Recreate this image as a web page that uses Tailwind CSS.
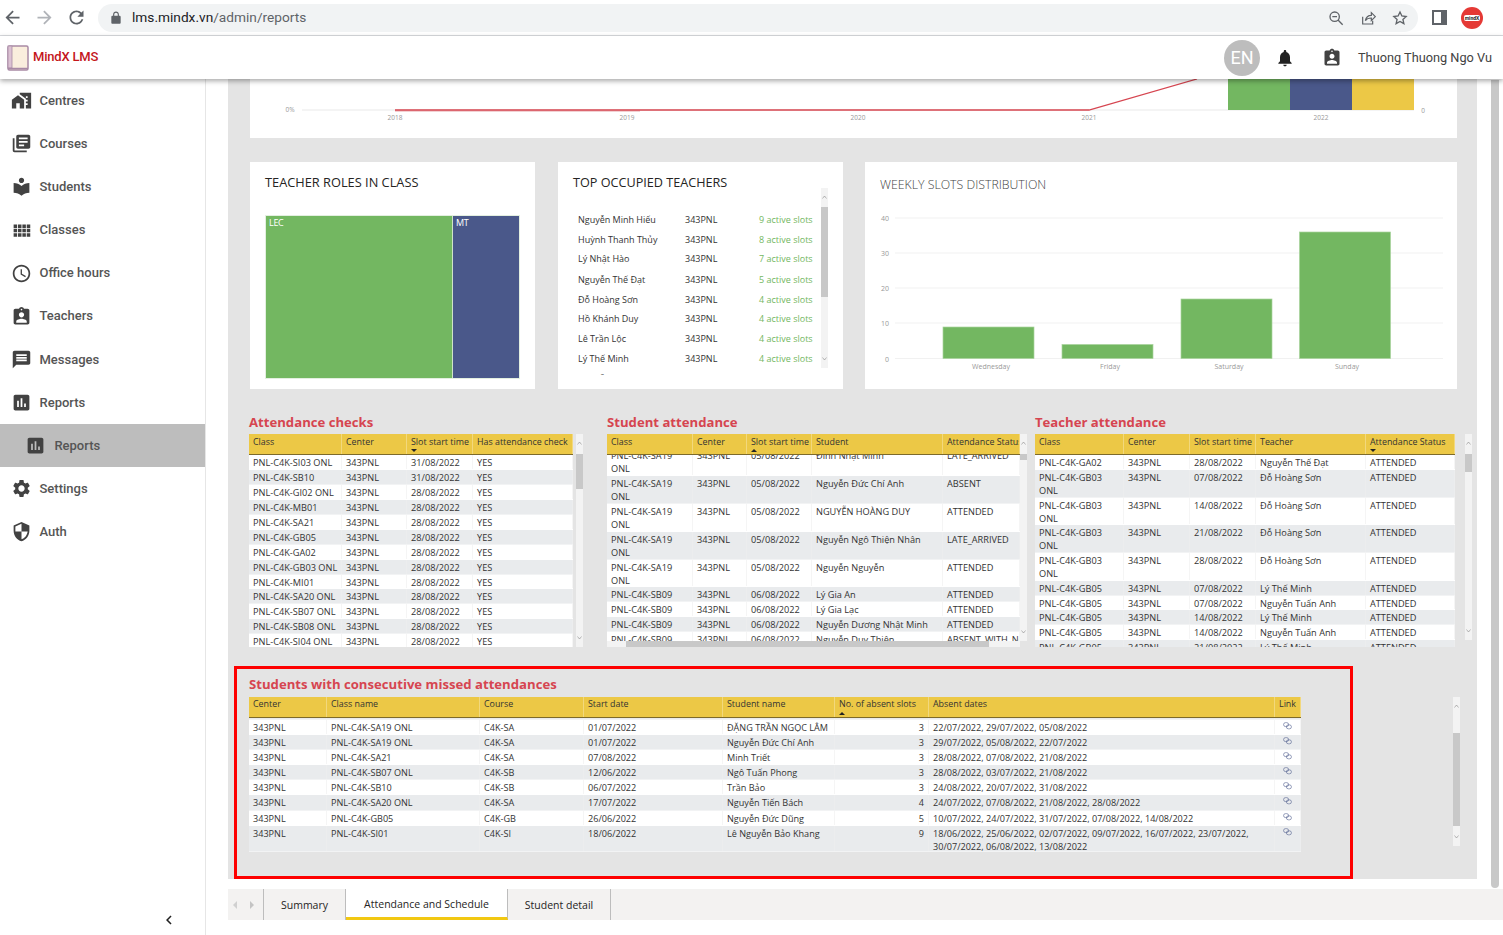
<!DOCTYPE html>
<html lang="en">
<head>
    <meta charset="UTF-8">
    <meta name="viewport" content="width=device-width, initial-scale=1.0">
    <title>MindX LMS - Reports</title>
    <script src="https://cdn.jsdelivr.net/npm/@tailwindcss/browser@4"></script>
</head>
<body class="bg-white">
<div class="relative w-[1503px] h-[935px] overflow-hidden flex flex-col font-['Roboto',sans-serif]">

    <!-- browser bar -->
    <div class="h-[36px] flex items-center bg-white border-b border-[#dadce0] shrink-0">
        <div class="w-[98px] flex items-center pl-[1.500px] gap-[11px]">
            <svg class="w-[21px] h-[21px] fill-[#5f6368]" viewBox="0 0 24 24"><path d="M20 11H7.830l5.590-5.590L12 4l-8 8 8 8 1.410-1.410L7.830 13H20v-2z"/></svg>
            <svg class="w-[21px] h-[21px] fill-[#b0b3b8]" viewBox="0 0 24 24"><path d="M4 11h12.170l-5.590-5.590L12 4l8 8-8 8-1.410-1.410L16.170 13H4v-2z"/></svg>
            <svg class="w-[21px] h-[21px] fill-[#5f6368]" viewBox="0 0 24 24"><path d="M17.650 6.350C16.200 4.900 14.210 4 12 4c-4.420 0-7.990 3.580-7.990 8s3.570 8 7.990 8c3.730 0 6.840-2.550 7.730-6h-2.080c-.82 2.330-3.040 4-5.650 4-3.310 0-6-2.690-6-6s2.690-6 6-6c1.660 0 3.140.69 4.220 1.780L13 11h7V4l-2.350 2.350z"/></svg>
        </div>
        <div class="w-[1320px] h-[28px] rounded-full bg-[#f1f3f4] flex items-center pl-[11px] pr-[10px]">
            <svg class="w-[14px] h-[14px] fill-[#5f6368]" viewBox="0 0 24 24"><path d="M18 8h-1V6c0-2.760-2.240-5-5-5S7 3.240 7 6v2H6c-1.100 0-2 .9-2 2v10c0 1.100.9 2 2 2h12c1.100 0 2-.9 2-2V10c0-1.100-.9-2-2-2zM9 6c0-1.660 1.340-3 3-3s3 1.340 3 3v2H9V6z"/></svg>
            <span class="ml-[9px] text-[13.700px] text-[#202124]">lms.mindx.vn<span class="text-[#5f6368]">/admin/reports</span></span>
            <div class="ml-auto flex items-center gap-[16px]">
                <svg class="w-[16px] h-[16px] fill-none stroke-[#5f6368] stroke-2" viewBox="0 0 24 24"><circle cx="10" cy="10" r="7"/><path d="M15 15l7 7M6.500 10h7"/></svg>
                <svg class="w-[16px] h-[16px] fill-none stroke-[#5f6368] stroke-[1.800]" viewBox="0 0 24 24"><path d="M4 10v11h15v-5M8 16c1-5 5-8 9-8V4l6 6-6 6v-4c-4 0-7 1-9 4z"/></svg>
                <svg class="w-[16px] h-[16px] fill-none stroke-[#5f6368] stroke-2" viewBox="0 0 24 24"><path d="M12 3l2.800 6 6.400.7-4.800 4.400 1.400 6.400L12 17.200l-5.800 3.300 1.400-6.400-4.800-4.400L9.200 9z"/></svg>
            </div>
        </div>
        <div class="ml-[14px] w-[15px] h-[15px] border-[2px] border-[#5f6368] border-r-[6px]"></div>
        <div class="ml-[14px] w-[22px] h-[22px] rounded-full bg-[#e53935] flex items-center justify-center">
            <span class="bg-white rounded-[2px] px-[1px] text-[5px] leading-[6px] font-bold text-[#222]">mindX</span>
        </div>
    </div>

    <!-- app header -->
    <div class="relative z-10 h-[43px] shrink-0 bg-white flex items-center shadow-[0_2px_5px_rgba(0,0,0,0.35)]">
        <svg class="ml-[7px] w-[22px] h-[26px]" viewBox="0 0 22 26">
            <rect x="1" y="1" width="20" height="24" rx="1.500" fill="#faeedd" stroke="#a98aa5" stroke-width="1.500"/>
            <rect x="1" y="1" width="4" height="22" fill="#dcc1d3" stroke="#a98aa5" stroke-width="0.800"/>
            <path d="M1 23.500h20" stroke="#a98aa5" stroke-width="1.500"/>
        </svg>
        <span class="ml-[4px] -mt-[1px] text-[13px] font-medium text-[#c4161c] tracking-[-0.2px]">MindX LMS</span>
        <div class="ml-auto flex items-center">
            <div class="w-[36px] h-[36px] rounded-full bg-[#bdbdbd] text-white text-[18px] flex items-center justify-center">EN</div>
            <svg class="ml-[15px] w-[20px] h-[20px] fill-[#212121]" viewBox="0 0 24 24"><path d="M12 22c1.100 0 2-.9 2-2h-4c0 1.100.89 2 2 2zm6-6v-5c0-3.070-1.640-5.640-4.500-6.320V4c0-.83-.67-1.500-1.500-1.500s-1.500.67-1.500 1.500v.68C7.630 5.360 6 7.920 6 11v5l-2 2v1h16v-1l-2-2z"/></svg>
            <svg class="ml-[27px] w-[20px] h-[20px] fill-[#424242]" viewBox="0 0 24 24"><path d="M19 3h-4.180C14.400 1.840 13.300 1 12 1c-1.300 0-2.400.84-2.820 2H5c-1.100 0-2 .9-2 2v14c0 1.100.9 2 2 2h14c1.100 0 2-.9 2-2V5c0-1.100-.9-2-2-2zm-7 0c.55 0 1 .45 1 1s-.45 1-1 1-1-.45-1-1 .45-1 1-1zm0 4c1.660 0 3 1.340 3 3s-1.340 3-3 3-3-1.340-3-3 1.340-3 3-3zm6 12H6v-1.400c0-2 4-3.100 6-3.100s6 1.100 6 3.100V19z"/></svg>
            <span class="ml-[16px] mr-[11px] text-[12.750px] text-[#424242]">Thuong Thuong Ngo Vu</span>
        </div>
    </div>

    <div class="flex flex-1 min-h-0">
        <!-- sidebar -->
        <aside class="w-[206px] shrink-0 border-r border-[#e6e6e6] flex flex-col text-[13px] text-[#555] font-medium">
            <div id="nav" class="pt-[0.200px]"></div>
            <div class="mt-auto h-[31px] flex items-center pl-[160px]">
                <svg class="w-[18px] h-[18px] fill-[#212121]" viewBox="0 0 24 24"><path d="M15.410 7.410L14 6l-6 6 6 6 1.410-1.410L10.830 12z"/></svg>
            </div>
        </aside>

        <main class="relative flex-1 pl-[22px] font-['Open_Sans',sans-serif]">
            <div class="relative w-[1249px] h-[800px] bg-[#e4e4e4] overflow-hidden">

                <!-- top chart -->
                <div class="ml-[22px] w-[1207px] h-[59px] bg-white">
                    <svg class="block" width="1207" height="59" viewBox="250 79 1207 59">
                        <line x1="302" y1="110" x2="1414" y2="110" stroke="#f0f0f0" stroke-width="1.500"/>
                        <line x1="395" y1="111" x2="640" y2="111" stroke="#e6a3a8"/>
                        <polyline points="395,110 1089,110 1197,79" fill="none" stroke="#d64550" stroke-width="1.300"/>
                        <rect x="1228" y="79" width="62" height="31" fill="#73b761"/>
                        <rect x="1290" y="79" width="62" height="31" fill="#4a588a"/>
                        <rect x="1352" y="79" width="62" height="31" fill="#ecc846"/>
                        <g font-size="6.500" fill="#999" text-anchor="middle">
                            <text x="290" y="112">0%</text>
                            <text x="395" y="119.500">2018</text>
                            <text x="627" y="119.500">2019</text>
                            <text x="858" y="119.500">2020</text>
                            <text x="1089" y="119.500">2021</text>
                            <text x="1321" y="119.500">2022</text>
                            <text x="1423" y="112.500">0</text>
                        </g>
                    </svg>
                </div>

                <!-- middle cards -->
                <div class="mt-[24px] ml-[22px] flex h-[227px]">
                    <section class="w-[285px] bg-white px-[15px] pt-[12px]">
                        <h3 class="text-[12.800px] leading-[16px] text-[#252423] whitespace-nowrap">TEACHER ROLES IN CLASS</h3>
                        <div class="mt-[25px] w-[255px] h-[164px] flex border border-[#e3efe0] text-white text-[9px] leading-[14px] tracking-[-0.3px]">
                            <div class="w-[187px] bg-[#73b761] pl-[3px] border-r border-[#cfe4c8]">LEC</div>
                            <div class="flex-1 bg-[#4a588a] pl-[3px]">MT</div>
                        </div>
                    </section>
                    <section class="ml-[23px] w-[285px] bg-white px-[15px] pt-[12px]">
                        <h3 class="text-[12.650px] leading-[16px] text-[#252423] whitespace-nowrap">TOP OCCUPIED TEACHERS</h3>
                        <div class="flex h-[180px] -mt-[2px]">
                            <div id="teachers" class="w-[250px] pl-[5px] pt-[25px] text-[9px] leading-[13px] text-[#333] overflow-hidden h-[187px]"></div>
                            <div id="bar-teachers"></div>
                        </div>
                    </section>
                    <section class="ml-[22px] w-[592px] bg-white">
                        <h3 class="pl-[15px] pt-[15px] text-[12.300px] leading-[16px] font-light text-[#444] h-[38px]">WEEKLY SLOTS DISTRIBUTION</h3>
                        <svg class="block" width="592" height="189" viewBox="865 200 592 189">
                            <g stroke="#f1f1f1" stroke-width="1">
                                <line x1="895" y1="218" x2="1443" y2="218"/>
                                <line x1="895" y1="253" x2="1443" y2="253"/>
                                <line x1="895" y1="288" x2="1443" y2="288"/>
                                <line x1="895" y1="323" x2="1443" y2="323"/>
                                <line x1="895" y1="358.500" x2="1443" y2="358.500"/>
                            </g>
                            <g fill="#73b761" stroke="#a9d39d" stroke-width="0.700">
                                <rect x="943" y="327" width="91" height="31.500"/>
                                <rect x="1062" y="344.500" width="91" height="14"/>
                                <rect x="1181" y="299" width="91" height="59.500"/>
                                <rect x="1299.500" y="232" width="91" height="126.500"/>
                            </g>
                            <g font-size="7" fill="#999" text-anchor="middle">
                                <text x="885" y="220.500">40</text>
                                <text x="885" y="255.500">30</text>
                                <text x="885" y="290.500">20</text>
                                <text x="885" y="325.500">10</text>
                                <text x="887" y="361.500">0</text>
                                <text x="991" y="368.500">Wednesday</text>
                                <text x="1110" y="368.500">Friday</text>
                                <text x="1229" y="368.500">Saturday</text>
                                <text x="1347" y="368.500">Sunday</text>
                            </g>
                        </svg>
                    </section>
                </div>

                <!-- three attendance tables -->
                <div class="mt-[26px] ml-[21px] flex h-[232px]">
                    <section class="w-[358px]">
                        <h2 class="h-[19px] text-[13.150px] leading-[15px] font-bold text-[#d64550]">Attendance checks</h2>
                        <div class="flex"><div id="t1"></div><div class="w-[3px]"></div><div id="bar-t1"></div></div>
                    </section>
                    <section class="w-[428px]">
                        <h2 class="h-[19px] text-[13.150px] leading-[15px] font-bold text-[#d64550]">Student attendance</h2>
                        <div class="flex"><div id="t2"></div><div id="bar-t2"></div></div>
                        <div class="w-[413px] h-[6px] bg-[#f3f3f3] -mt-[6px] relative pl-[19px]"><div class="w-[363px] h-[6px] bg-[#c8c8c8]"></div></div>
                    </section>
                    <section class="w-[440px]">
                        <h2 class="h-[19px] text-[13.150px] leading-[15px] font-bold text-[#d64550]">Teacher attendance</h2>
                        <div class="flex"><div id="t3"></div><div class="w-[10px]"></div><div id="bar-t3"></div></div>
                    </section>
                </div>

                <!-- consecutive missed attendances -->
                <section class="mt-[30px] ml-[21px]">
                    <h2 class="h-[20px] text-[13.150px] leading-[15px] font-bold text-[#d64550]">Students with consecutive missed attendances</h2>
                    <div class="flex"><div id="t4"></div><div class="w-[152px]"></div><div id="bar-t4"></div></div>
                </section>

                <div class="absolute left-[6px] top-[587px] w-[1119px] h-[213px] border-[3px] border-[#fe0000] pointer-events-none"></div>
            </div>

            <!-- report tabs -->
            <nav class="mt-[10px] h-[31px] bg-[#f3f2f1] flex text-[10.500px] text-[#252423]">
                <div class="w-[36px] flex items-center gap-[13px] pl-[5px] border-r border-[#bdbdbd]">
                    <span class="w-0 h-0 border-y-[4px] border-y-transparent border-r-[4px] border-r-[#d0d0d0]"></span>
                    <span class="w-0 h-0 border-y-[4px] border-y-transparent border-l-[4px] border-l-[#c4c4c4]"></span>
                </div>
                <div class="w-[82px] pt-[2px] flex items-center justify-center border-r border-[#bdbdbd]">Summary</div>
                <div class="w-[162px] pt-[4px] flex items-center justify-center bg-white border-b-[3px] border-[#f2c811] border-r border-r-[#bdbdbd]">Attendance and Schedule</div>
                <div class="w-[103px] pt-[2px] flex items-center justify-center border-r border-[#bdbdbd]">Student detail</div>
            </nav>
        </main>
    </div>

    <!-- page scrollbar -->
    <div class="absolute left-[1491px] top-[80px] w-[8px] h-[808px] bg-[#c8c8c8] rounded-b-[4px]"></div>
</div>

<script>
    const icons = {
        centres: "M1 11v10h5v-6h4v6h5V11L8 6z M10 3v1.970l7 5V11h2v2h-2v2h2v2h-2v4h6V3H10zm9 6h-2V7h2v2z",
        courses: "M4 6H2v14c0 1.100.9 2 2 2h14v-2H4V6zm16-4H8c-1.100 0-2 .9-2 2v12c0 1.100.9 2 2 2h12c1.100 0 2-.9 2-2V4c0-1.100-.9-2-2-2zm-1 9H9V9h10v2zm-4 4H9v-2h6v2zm4-8H9V5h10v2z",
        students: "M12 11.550C9.640 9.350 6.480 8 3 8v11c3.480 0 6.640 1.350 9 3.550 2.360-2.190 5.520-3.550 9-3.550V8c-3.480 0-6.640 1.350-9 3.550zM12 8c1.660 0 3-1.340 3-3s-1.340-3-3-3-3 1.340-3 3 1.340 3 3 3z",
        classes: "M3 9h4V5H3v4zm0 5h4v-4H3v4zm5 0h4v-4H8v4zm5 0h4v-4h-4v4zM8 9h4V5H8v4zm5-4v4h4V5h-4zm5 9h4v-4h-4v4zM3 19h4v-4H3v4zm5 0h4v-4H8v4zm5 0h4v-4h-4v4zm5 0h4v-4h-4v4zm0-14v4h4V5h-4z",
        hours: "M11.990 2C6.470 2 2 6.480 2 12s4.470 10 9.990 10C17.520 22 22 17.520 22 12S17.520 2 11.990 2zM12 20c-4.420 0-8-3.580-8-8s3.580-8 8-8 8 3.580 8 8-3.580 8-8 8z M12.500 7H11v6l5.250 3.150.75-1.230-4.500-2.670z",
        teachers: "M19 3h-4.180C14.400 1.840 13.300 1 12 1c-1.300 0-2.400.84-2.820 2H5c-1.100 0-2 .9-2 2v14c0 1.100.9 2 2 2h14c1.100 0 2-.9 2-2V5c0-1.100-.9-2-2-2zm-7 0c.55 0 1 .45 1 1s-.45 1-1 1-1-.45-1-1 .45-1 1-1zm0 4c1.660 0 3 1.340 3 3s-1.340 3-3 3-3-1.340-3-3 1.340-3 3-3zm6 12H6v-1.400c0-2 4-3.100 6-3.100s6 1.100 6 3.100V19z",
        messages: "M20 2H4c-1.100 0-1.990.9-1.990 2L2 22l4-4h14c1.100 0 2-.9 2-2V4c0-1.100-.9-2-2-2zm-2 12H6v-2h12v2zm0-3H6V9h12v2zm0-3H6V6h12v2z",
        reports: "M19 3H5c-1.100 0-2 .9-2 2v14c0 1.100.9 2 2 2h14c1.100 0 2-.9 2-2V5c0-1.100-.9-2-2-2zM9 17H7v-7h2v7zm4 0h-2V7h2v10zm4 0h-2v-4h2v4z",
        settings: "M19.140 12.940c.04-.3.06-.61.06-.94 0-.32-.02-.64-.07-.94l2.030-1.580c.18-.14.23-.41.12-.61l-1.920-3.320c-.12-.22-.37-.29-.59-.22l-2.390.96c-.5-.38-1.030-.7-1.620-.94l-.36-2.540c-.04-.24-.24-.41-.48-.41h-3.840c-.24 0-.43.17-.47.41l-.36 2.540c-.59.24-1.130.57-1.620.94l-2.390-.96c-.22-.08-.47 0-.59.22L2.740 8.870c-.12.21-.08.47.12.61l2.030 1.580c-.05.3-.09.63-.09.94s.02.64.07.94l-2.030 1.580c-.18.14-.23.41-.12.61l1.920 3.320c.12.22.37.29.59.22l2.390-.96c.5.38 1.030.7 1.620.94l.36 2.540c.05.24.24.41.48.41h3.840c.24 0 .44-.17.47-.41l.36-2.540c.59-.24 1.130-.56 1.620-.94l2.390.96c.22.08.47 0 .59-.22l1.920-3.320c.12-.22.07-.47-.12-.61l-2.010-1.580zM12 15.600c-1.980 0-3.600-1.620-3.600-3.600s1.620-3.600 3.600-3.600 3.600 1.620 3.600 3.600-1.620 3.600-3.600 3.600z",
        auth: "M12 1L3 5v6c0 5.550 3.840 10.740 9 12 5.160-1.260 9-6.450 9-12V5l-9-4zm0 10.990h7c-.53 4.120-3.280 7.790-7 8.940V12H5V6.300l7-3.110v8.800z"
    };

    const navItems = [
        ["Centres", "centres"], ["Courses", "courses"], ["Students", "students"], ["Classes", "classes"],
        ["Office hours", "hours"], ["Teachers", "teachers"], ["Messages", "messages"], ["Reports", "reports"],
        ["Reports", "reports", true], ["Settings", "settings"], ["Auth", "auth"]
    ];
    document.getElementById("nav").innerHTML = navItems.map(([label, icon, active]) => `
        <div class="h-[43.100px] flex items-center ${active ? "bg-[#bdbdbd] pl-[25.400px]" : "pl-[10.500px]"}">
            <svg class="w-[21px] h-[21px] fill-[#424242] shrink-0" viewBox="0 0 24 24"><path d="${icons[icon]}"/></svg>
            <span class="ml-[8px]">${label}</span>
        </div>`).join("");

    const teachers = [
        ["Nguyễn Minh Hiếu", 9, 19.7], ["Huỳnh Thanh Thủy", 8, 19.3], ["Lý Nhật Hào", 7, 20.6], ["Nguyễn Thế Đạt", 5, 20],
        ["Đỗ Hoàng Sơn", 4, 19.2], ["Hồ Khánh Duy", 4, 20], ["Lê Trần Lộc", 4, 20], ["Lý Thế Minh", 4, 20], ["Nguyễn Văn Tú", 4, 20]
    ];
    document.getElementById("teachers").innerHTML = teachers.map(([name, slots, h]) => `
        <div class="flex" style="height:${h}px">
            <span class="w-[107px]">${name}</span>
            <span class="w-[74px]">343PNL</span>
            <span class="text-[#73b761]">${slots} active slots</span>
        </div>`).join("");

    function scrollbar(id, height, offset, thumb) {
        document.getElementById(id).innerHTML = `
            <div class="relative w-[7px] bg-[#f3f3f3] overflow-hidden" style="height:${height}px">
                <div class="bg-[#c8c8c8]" style="margin-top:${offset}px;height:${thumb}px"></div>
                <svg class="absolute left-[1px] top-[7px] w-[5px] h-[4px] fill-none stroke-[#777]" viewBox="0 0 10 8"><path d="M1 7l4-5 4 5"/></svg>
                <svg class="absolute left-[1px] bottom-[7px] w-[5px] h-[4px] fill-none stroke-[#777]" viewBox="0 0 10 8"><path d="M1 1l4 5 4-5"/></svg>
            </div>`;
    }
    scrollbar("bar-teachers", 180, 19, 90);
    scrollbar("bar-t1", 213, 20, 35);
    scrollbar("bar-t2", 207, 20, 6);
    scrollbar("bar-t3", 206, 20, 18);
    scrollbar("bar-t4", 149, 36, 93);

    const linkIcon = `<svg class="w-[9px] h-[8px] mx-auto mt-[1px] fill-none stroke-[#4a588a]" viewBox="0 0 16 14"><rect x="1" y="1" width="9" height="7" rx="3.500"/><rect x="6" y="5" width="9" height="7" rx="3.500"/></svg>`;

    // rows: [height, cells...]; cells keep their own line breaks
    function table(id, opts) {
        const { cols, head, sort, rows, bodyHeight, offset = 0, startGray = false, right = -1, link = -1, headClass = "pt-[1px]", bodyClass = "text-[9.200px]" } = opts;
        const total = cols.reduce((a, b) => a + b, 0);
        const headCells = head.map((text, i) => `
            <div class="relative shrink-0 pl-[4px] ${headClass} border-r border-white/30 whitespace-pre overflow-hidden" style="width:${cols[i]}px">${text}${
                sort && sort[0] === i ? `<span class="absolute left-[4px] top-[15px] w-0 h-0 border-x-[3px] border-x-transparent ${sort[1] === "up" ? "border-b-[3px] border-b-[#222]" : "border-t-[3px] border-t-[#222]"}"></span>` : ""
            }</div>`).join("");
        const bodyRows = rows.map(([h, ...cells], r) => {
            const gray = (r % 2 === 1) !== startGray;
            return `<div class="flex border-b border-white/40 ${gray ? "bg-[#e9ebed]" : "bg-white"}" style="height:${h}px">${cells.map((text, i) => `
                <div class="shrink-0 px-[4px] pt-[1px] border-r border-[#eeeeee]/60 whitespace-pre overflow-hidden ${i === right ? "text-right" : ""}" style="width:${cols[i]}px">${i === link ? linkIcon : text}</div>`).join("")}</div>`;
        }).join("");
        document.getElementById(id).innerHTML = `
            <div class="${bodyClass} leading-[13px] text-[#333] font-['Open_Sans',sans-serif]" style="width:${total}px">
                <div class="flex h-[21px] bg-[#ecc846] border-b border-[#7d6a2a] text-[8.900px]">${headCells}</div>
                <div class="overflow-hidden" style="height:${bodyHeight}px"><div style="margin-top:${offset}px">${bodyRows}</div></div>
            </div>`;
    }

    const checks = [
        ["PNL-C4K-SI03 ONL", "31/08/2022"], ["PNL-C4K-SB10", "31/08/2022"], ["PNL-C4K-GI02 ONL", "28/08/2022"], ["PNL-C4K-MB01", "28/08/2022"],
        ["PNL-C4K-SA21", "28/08/2022"], ["PNL-C4K-GB05", "28/08/2022"], ["PNL-C4K-GA02", "28/08/2022"], ["PNL-C4K-GB03 ONL", "28/08/2022"],
        ["PNL-C4K-MI01", "28/08/2022"], ["PNL-C4K-SA20 ONL", "28/08/2022"], ["PNL-C4K-SB07 ONL", "28/08/2022"], ["PNL-C4K-SB08 ONL", "28/08/2022"],
        ["PNL-C4K-SI04 ONL", "28/08/2022"]
    ];
    table("t1", {
        cols: [93, 65, 66, 100],
        head: ["Class", "Center", "Slot start time", "Has attendance check"],
        sort: [2, "down"],
        bodyHeight: 192,
        rows: checks.map(([c, d]) => [14.95, c, "343PNL", d, "YES"])
    });

    const sa19 = "PNL-C4K-SA19\nONL";
    table("t2", {
        cols: [86, 54, 65, 131, 77],
        head: ["Class", "Center", "Slot start time", "Student", "Attendance Status"],
        sort: [2, "up"],
        bodyHeight: 192,
        offset: -7,
        rows: [
            [28, sa19, "343PNL", "05/08/2022", "Đinh Nhật Minh", "LATE_ARRIVED"],
            [28, sa19, "343PNL", "05/08/2022", "Nguyễn Đức Chí Anh", "ABSENT"],
            [28, sa19, "343PNL", "05/08/2022", "NGUYỄN HOÀNG DUY", "ATTENDED"],
            [28, sa19, "343PNL", "05/08/2022", "Nguyễn Ngô Thiện Nhân", "LATE_ARRIVED"],
            [27, sa19, "343PNL", "05/08/2022", "Nguyễn Nguyễn", "ATTENDED"],
            [15, "PNL-C4K-SB09", "343PNL", "06/08/2022", "Lý Gia An", "ATTENDED"],
            [15, "PNL-C4K-SB09", "343PNL", "06/08/2022", "Lý Gia Lạc", "ATTENDED"],
            [15, "PNL-C4K-SB09", "343PNL", "06/08/2022", "Nguyễn Dương Nhật Minh", "ATTENDED"],
            [15, "PNL-C4K-SB09", "343PNL", "06/08/2022", "Nguyễn Duy Thiện", "ABSENT_WITH_NOTICE"]
        ]
    });

    const gb03 = "PNL-C4K-GB03\nONL";
    table("t3", {
        cols: [89, 66, 66, 110, 89],
        head: ["Class", "Center", "Slot start time", "Teacher", "Attendance Status"],
        sort: [4, "down"],
        bodyHeight: 192,
        rows: [
            [15, "PNL-C4K-GA02", "343PNL", "28/08/2022", "Nguyễn Thế Đạt", "ATTENDED"],
            [27.700, gb03, "343PNL", "07/08/2022", "Đỗ Hoàng Sơn", "ATTENDED"],
            [27.700, gb03, "343PNL", "14/08/2022", "Đỗ Hoàng Sơn", "ATTENDED"],
            [27.700, gb03, "343PNL", "21/08/2022", "Đỗ Hoàng Sơn", "ATTENDED"],
            [27.700, gb03, "343PNL", "28/08/2022", "Đỗ Hoàng Sơn", "ATTENDED"],
            [14.800, "PNL-C4K-GB05", "343PNL", "07/08/2022", "Lý Thế Minh", "ATTENDED"],
            [14.800, "PNL-C4K-GB05", "343PNL", "07/08/2022", "Nguyễn Tuấn Anh", "ATTENDED"],
            [14.800, "PNL-C4K-GB05", "343PNL", "14/08/2022", "Lý Thế Minh", "ATTENDED"],
            [14.800, "PNL-C4K-GB05", "343PNL", "14/08/2022", "Nguyễn Tuấn Anh", "ATTENDED"],
            [14.800, "PNL-C4K-GB05", "343PNL", "21/08/2022", "Lý Thế Minh", "ATTENDED"]
        ]
    });

    const missed = [
        [15, "PNL-C4K-SA19 ONL", "C4K-SA", "01/07/2022", "", "3", "15/07/2022, 22/07/2022, 29/07/2022"],
        [15.100, "PNL-C4K-SA19 ONL", "C4K-SA", "01/07/2022", "ĐẶNG TRẦN NGỌC LÂM", "3", "22/07/2022, 29/07/2022, 05/08/2022"],
        [15.100, "PNL-C4K-SA19 ONL", "C4K-SA", "01/07/2022", "Nguyễn Đức Chí Anh", "3", "29/07/2022, 05/08/2022, 22/07/2022"],
        [15.100, "PNL-C4K-SA21", "C4K-SA", "07/08/2022", "Minh Triết", "3", "28/08/2022, 07/08/2022, 21/08/2022"],
        [15.100, "PNL-C4K-SB07 ONL", "C4K-SB", "12/06/2022", "Ngô Tuấn Phong", "3", "28/08/2022, 03/07/2022, 21/08/2022"],
        [15.100, "PNL-C4K-SB10", "C4K-SB", "06/07/2022", "Trần Bảo", "3", "24/08/2022, 20/07/2022, 31/08/2022"],
        [15.100, "PNL-C4K-SA20 ONL", "C4K-SA", "17/07/2022", "Nguyễn Tiến Bách", "4", "24/07/2022, 07/08/2022, 21/08/2022, 28/08/2022"],
        [15.100, "PNL-C4K-GB05", "C4K-GB", "26/06/2022", "Nguyễn Đức Dũng", "5", "10/07/2022, 24/07/2022, 31/07/2022, 07/08/2022, 14/08/2022"],
        [26, "PNL-C4K-SI01", "C4K-SI", "18/06/2022", "Lê Nguyễn Bảo Khang", "9", "18/06/2022, 25/06/2022, 02/07/2022, 09/07/2022, 16/07/2022, 23/07/2022,\n30/07/2022, 06/08/2022, 13/08/2022"]
    ];
    table("t4", {
        cols: [78, 153, 104, 139, 112, 94, 346, 26],
        head: ["Center", "Class name", "Course", "Start date", "Student name", "No. of absent slots", "Absent dates", "Link"],
        sort: [5, "up"],
        bodyHeight: 135,
        offset: -13,
        startGray: true,
        right: 5,
        link: 7,
        headClass: "pt-0",
        bodyClass: "text-[9.100px]",
        rows: missed.map(([h, cls, course, start, name, n, dates]) => [h, "343PNL", cls, course, start, name, n, dates, ""])
    });
</script>
</body>
</html>
